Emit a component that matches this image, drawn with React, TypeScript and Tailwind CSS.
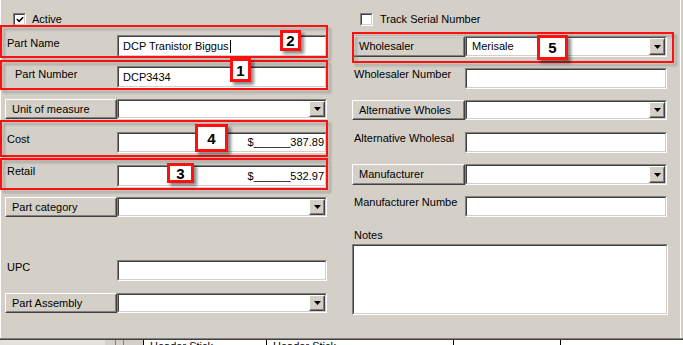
import React from "react";

type P = { className?: string; children?: React.ReactNode };

function Sunken({ className = "", children }: P) {
  return (
    <div className={`border border-t-[#808080] border-l-[#808080] border-b-white border-r-white ${className}`}>
      <div className="flex h-full w-full items-center border border-t-[#404040] border-l-[#404040] border-b-[#d4d0c8] border-r-[#d4d0c8] bg-white">
        {children}
      </div>
    </div>
  );
}

function Raised({ className = "", children }: P) {
  return (
    <div className={`border border-t-white border-l-white border-b-[#404040] border-r-[#404040] ${className}`}>
      <div className="flex h-full w-full items-center border border-t-[#d4d0c8] border-l-[#d4d0c8] border-b-[#808080] border-r-[#808080] bg-[#d4d0c8]">
        {children}
      </div>
    </div>
  );
}

function Combo({ className = "", text }: { className?: string; text?: string }) {
  return (
    <Sunken className={className}>
      <div className="flex-1 pl-[5px] leading-[13px]">{text}</div>
      <Raised className="h-full w-[16px]">
        <div className="flex w-full justify-center">
          <svg width="7" height="4" viewBox="0 0 7 4">
            <polygon points="0,0 7,0 3.5,4" fill="#000" />
          </svg>
        </div>
      </Raised>
    </Sunken>
  );
}

function Checkbox({ checked }: { checked?: boolean }) {
  return (
    <Sunken className="h-[13px] w-[13px]">
      {checked && (
        <svg width="9" height="9" viewBox="0 0 9 9" className="ml-[1px]">
          <polyline points="1,4 3.5,6.5 8,2" fill="none" stroke="#000" strokeWidth="1.8" />
        </svg>
      )}
    </Sunken>
  );
}

function Badge({ className = "", n }: { className?: string; n: string }) {
  return (
    <div
      className={`absolute flex items-center justify-center border-[3px] border-[#ff1010] bg-white text-[15px] font-bold leading-none text-black shadow-[3px_3px_3px_rgba(0,0,0,0.45)] ${className}`}
    >
      {n}
    </div>
  );
}

export default function App() {
  return (
    <div className="relative h-[345px] w-[683px] overflow-hidden bg-[#d4d0c8] font-['Liberation_Sans',Arial,sans-serif] text-[11px] text-black">
      <div className="flex h-[338px] w-[681px] border-l border-r border-white">
        {/* Left column */}
        <div className="flex w-[329px] flex-col">
          <div className="ml-[12px] mt-[13px] flex h-[13px] items-center">
            <Checkbox checked />
            <span className="ml-[6px] leading-[13px]">Active</span>
          </div>

          <div className="mt-[9px] flex h-[22px]">
            <div className="w-[116px] pl-[6px] pt-[2px] leading-[13px]">Part Name</div>
            <Sunken className="h-full w-[210px]">
              <span className="pl-[4px] leading-[13px]">DCP Tranistor Biggus</span>
              <span className="ml-[1px] h-[13px] w-px bg-black" />
            </Sunken>
          </div>

          <div className="mt-[9px] flex h-[22px]">
            <div className="w-[116px] pl-[14px] pt-[2px] leading-[13px]">Part Number</div>
            <Sunken className="h-full w-[210px]">
              <span className="pl-[4px] leading-[13px]">DCP3434</span>
            </Sunken>
          </div>

          <div className="mt-[11px] flex h-[20px]">
            <Raised className="ml-[4px] h-full w-[112px]">
              <span className="pl-[5px] leading-[13px]">Unit of measure</span>
            </Raised>
            <Combo className="h-full w-[210px]" />
          </div>

          <div className="mt-[13px] flex h-[21px]">
            <div className="w-[116px] pl-[6px] pt-[1px] leading-[13px]">Cost</div>
            <Sunken className="h-full w-[210px]">
              <span className="w-full pr-[1px] text-right leading-[13px]">$______387.89</span>
            </Sunken>
          </div>

          <div className="mt-[12px] flex h-[22px]">
            <div className="w-[116px] pl-[6px] leading-[13px]">Retail</div>
            <Sunken className="h-full w-[210px]">
              <span className="w-full pr-[1px] text-right leading-[13px]">$______532.97</span>
            </Sunken>
          </div>

          <div className="mt-[10px] flex h-[20px]">
            <Raised className="ml-[4px] h-full w-[112px]">
              <span className="pl-[5px] leading-[13px]">Part category</span>
            </Raised>
            <Combo className="h-full w-[210px]" />
          </div>

          <div className="mt-[43px] flex h-[21px]">
            <div className="w-[116px] pl-[6px] pt-[1px] leading-[13px]">UPC</div>
            <Sunken className="h-full w-[210px]" />
          </div>

          <div className="mt-[12px] flex h-[20px]">
            <Raised className="ml-[4px] h-full w-[112px]">
              <span className="pl-[5px] leading-[13px]">Part Assembly</span>
            </Raised>
            <Combo className="h-full w-[210px]" />
          </div>
        </div>

        {/* Right column */}
        <div className="ml-[22px] flex w-[328px] flex-col">
          <div className="ml-[8px] mt-[13px] flex h-[13px] items-center">
            <Checkbox />
            <span className="ml-[7px] leading-[13px]">Track Serial Number</span>
          </div>

          <div className="mt-[10px] flex h-[21px]">
            <Raised className="h-full w-[113px]">
              <span className="pl-[5px] leading-[13px]">Wholesaler</span>
            </Raised>
            <Combo className="h-full w-[202px]" text="Merisale" />
          </div>

          <div className="mt-[11px] flex h-[21px]">
            <div className="w-[113px] pl-[2px] leading-[13px]">Wholesaler Number</div>
            <Sunken className="h-full w-[202px]" />
          </div>

          <div className="mt-[11px] flex h-[20px]">
            <Raised className="h-full w-[113px]">
              <span className="pl-[5px] leading-[13px]">Alternative Wholes</span>
            </Raised>
            <Combo className="h-full w-[202px]" />
          </div>

          <div className="mt-[12px] flex h-[21px]">
            <div className="w-[113px] pl-[2px] leading-[13px]">Alternative Wholesal</div>
            <Sunken className="h-full w-[202px]" />
          </div>

          <div className="mt-[11px] flex h-[21px]">
            <Raised className="h-full w-[113px]">
              <span className="pl-[5px] leading-[13px]">Manufacturer</span>
            </Raised>
            <Combo className="h-full w-[202px]" />
          </div>

          <div className="mt-[11px] flex h-[21px]">
            <div className="w-[113px] pl-[2px] leading-[13px]">Manufacturer Numbe</div>
            <Sunken className="h-full w-[202px]" />
          </div>

          <div className="mt-[12px] pl-[2px] leading-[13px]">Notes</div>
          <Sunken className="mt-[2px] h-[71px] w-[316px]" />
        </div>
      </div>

      {/* separator */}
      <div className="h-px w-full bg-[#808080]" />
      <div className="h-px w-full bg-[#404040]" />

      {/* grid header strip */}
      <div className="flex h-[5px] w-full overflow-hidden bg-white leading-[13px]">
        <div className="w-[105px] bg-[#e4e1db]" />
        <div className="w-[10px] bg-[#d4d0c8]" />
        <div className="w-[8px] border-l border-[#808080] bg-[#d4d0c8]" />
        <div className="w-[20px] border-l border-[#808080] bg-[#d4d0c8]" />
        <div className="w-[123px] border-l border-black pl-[6px]">Header Stick</div>
        <div className="w-[187px] border-l border-black pl-[6px]">Header Stick</div>
        <div className="w-[107px] border-l border-black" />
        <div className="flex-1 border-l border-black" />
      </div>

      {/* annotation shadows */}
      <div className="absolute left-[3px] top-[28px] h-[33px] w-[328px] border-2 border-[#8a8780] opacity-60 blur-[1px]" />
      <div className="absolute left-[3px] top-[63px] h-[30px] w-[328px] border-2 border-[#8a8780] opacity-60 blur-[1px]" />
      <div className="absolute left-[3px] top-[123px] h-[37px] w-[328px] border-2 border-[#8a8780] opacity-60 blur-[1px]" />
      <div className="absolute left-[3px] top-[161px] h-[32px] w-[328px] border-2 border-[#8a8780] opacity-60 blur-[1px]" />
      <div className="absolute left-[355px] top-[35px] h-[31px] w-[322px] border-2 border-[#8a8780] opacity-60 blur-[1px]" />

      {/* annotation boxes */}
      <div className="absolute left-0 top-[25px] h-[33px] w-[328px] border-2 border-[#ff1010]" />
      <div className="absolute left-0 top-[60px] h-[30px] w-[328px] border-2 border-[#ff1010]" />
      <div className="absolute left-0 top-[120px] h-[37px] w-[328px] border-2 border-[#ff1010]" />
      <div className="absolute left-0 top-[158px] h-[32px] w-[328px] border-2 border-[#ff1010]" />
      <div className="absolute left-[352px] top-[32px] h-[31px] w-[322px] border-2 border-[#ff1010]" />

      <Badge n="2" className="left-[280px] top-[30px] h-[21px] w-[21px]" />
      <Badge n="1" className="left-[230px] top-[58px] h-[24px] w-[21px]" />
      <Badge n="4" className="left-[195px] top-[124px] h-[28px] w-[33px]" />
      <Badge n="3" className="left-[167px] top-[163px] h-[20px] w-[27px]" />
      <Badge n="5" className="left-[537px] top-[35px] h-[25px] w-[31px]" />
    </div>
  );
}
